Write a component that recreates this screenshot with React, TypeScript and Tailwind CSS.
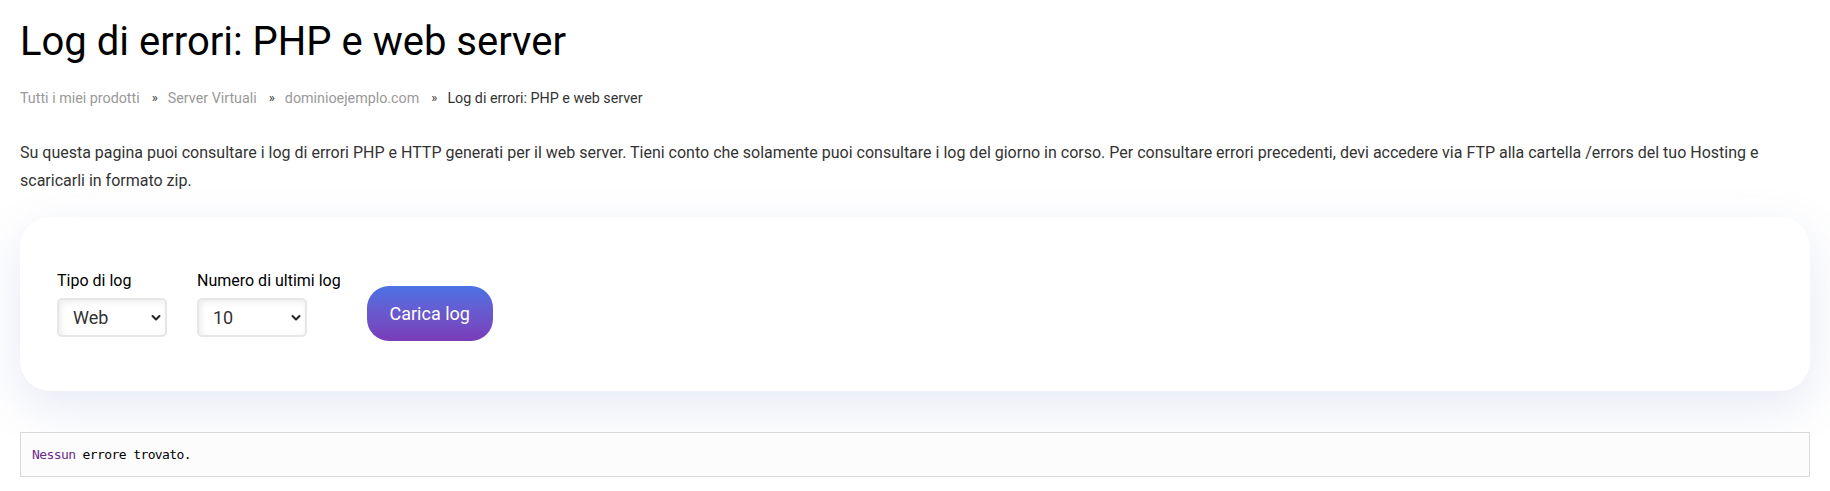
import React from "react";

function Chevron() {
  return (
    <svg
      className="pointer-events-none absolute right-[6px] top-1/2 -translate-y-1/2"
      width="10"
      height="7"
      viewBox="0 0 10 7"
      fill="none"
    >
      <path d="M1.5 1.5 L5 5 L8.5 1.5" stroke="#222" strokeWidth="2" strokeLinecap="round" strokeLinejoin="round" />
    </svg>
  );
}

function Field({ label, value, options, className }: { label: string; value: string; options: string[]; className?: string }) {
  return (
    <div className={"flex flex-col " + (className ?? "")}>
      <label className="text-[16px] leading-[24px] text-black whitespace-nowrap">{label}</label>
      <div className="relative mt-[5px] w-[110px] h-[39px]">
        <select
          defaultValue={value}
          className="appearance-none w-full h-full rounded-[5px] border-2 border-[#e6e6e6] bg-white pl-[14px] pr-[20px] text-[18px] text-[#333] shadow-[inset_2px_2px_6px_rgba(0,0,0,0.08)] outline-none font-['Roboto']"
        >
          {options.map((o) => (
            <option key={o} value={o}>
              {o}
            </option>
          ))}
        </select>
        <Chevron />
      </div>
    </div>
  );
}

export default function App() {
  return (
    <div className="min-h-[491px] bg-white px-[20px] pt-[18px] font-['Roboto',sans-serif]">
      <h1 className="text-[40px] leading-[48px] font-normal text-black">Log di errori: PHP e web server</h1>

      <nav className="mt-[22px] flex items-center text-[14.3px] leading-[20px]">
        <span className="text-[#999]">Tutti i miei prodotti</span>
        <span className="ml-[12px] mr-[10px] text-[#333] text-[13px]">»</span>
        <span className="text-[#999]">Server Virtuali</span>
        <span className="ml-[12px] mr-[10px] text-[#333] text-[13px]">»</span>
        <span className="text-[#999]">dominioejemplo.com</span>
        <span className="ml-[12px] mr-[10px] text-[#333] text-[13px]">»</span>
        <span className="text-[#333]">Log di errori: PHP e web server</span>
      </nav>

      <p className="mt-[31px] text-[16px] leading-[28px] text-[#333]">
        Su questa pagina puoi consultare i log di errori PHP e HTTP generati per il web server. Tieni conto che solamente puoi consultare i log del giorno in corso. Per consultare errori precedenti, devi accedere via FTP alla cartella /errors del tuo Hosting e scaricarli in formato zip.
      </p>

      <div className="mt-[22px] rounded-[30px] bg-white px-[37px] pt-[52px] pb-[50px] shadow-[0_16px_50px_rgba(80,100,170,0.14)] flex items-start">
        <Field label="Tipo di log" value="Web" options={["Web", "PHP"]} className="mr-[30px]" />
        <Field label="Numero di ultimi log" value="10" options={["10", "25", "50", "100"]} className="mr-[26px]" />
        <button className="mt-[17px] h-[55px] w-[126px] rounded-[22px] bg-gradient-to-b from-[#4872e4] to-[#7a3bb7] text-[18px] text-white font-['Roboto']">
          Carica log
        </button>
      </div>

      <div className="mt-[41px] h-[45px] border border-[#d9d9d9] bg-[#fcfcfd] pl-[11px] flex items-center font-['DejaVu_Sans_Mono',monospace] text-[13px] tracking-[-0.6px] text-black">
        <span>
          <span className="text-[#6b2a8a]">Nessun</span> errore trovato.
        </span>
      </div>
    </div>
  );
}
